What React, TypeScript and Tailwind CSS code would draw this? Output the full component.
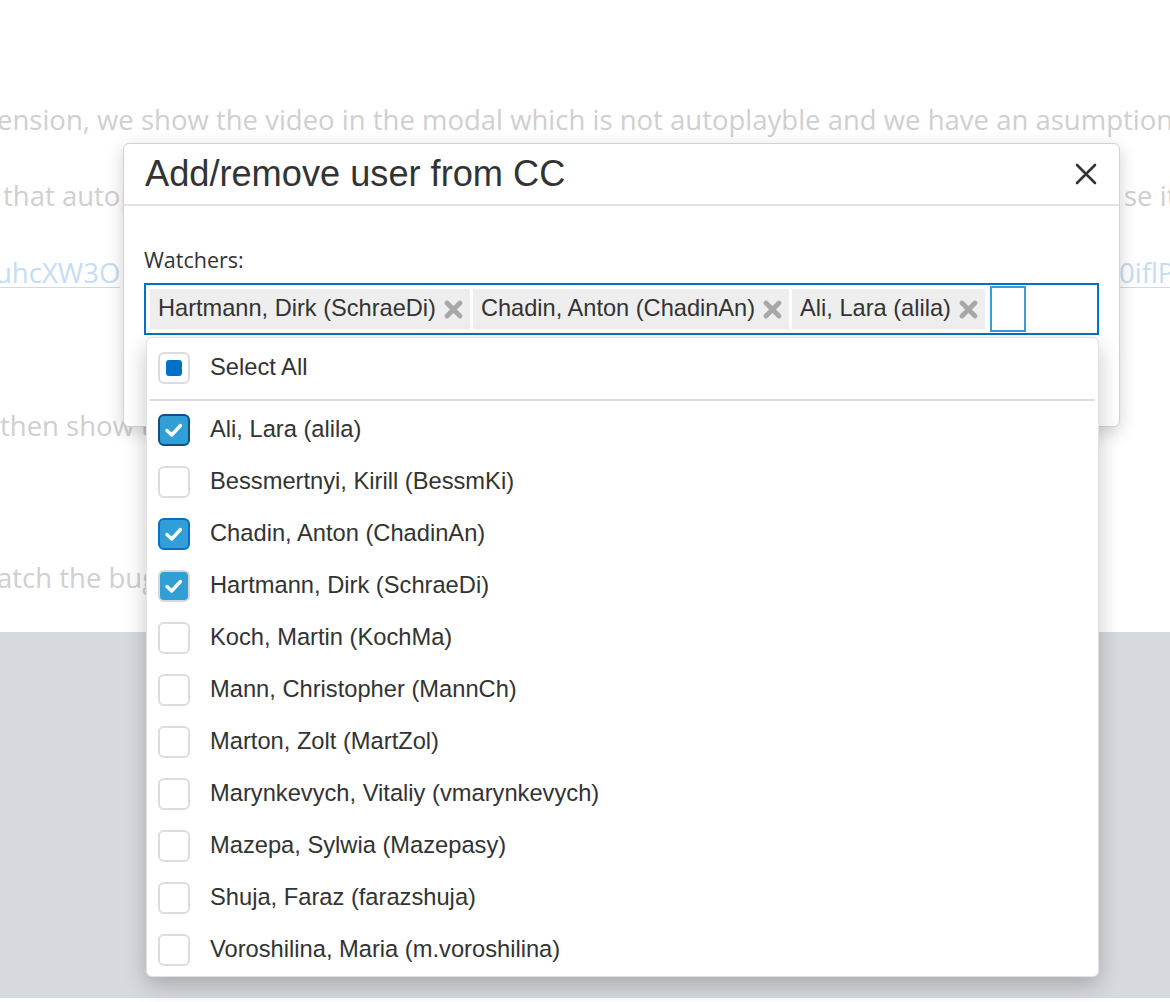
const USERS: { name: string; checked: boolean; ring: string }[] = [
  { name: 'Ali, Lara (alila)', checked: true, ring: 'border-[#0c4f8c]' },
  { name: 'Bessmertnyi, Kirill (BessmKi)', checked: false, ring: '' },
  { name: 'Chadin, Anton (ChadinAn)', checked: true, ring: 'border-[#0a6fc4]' },
  { name: 'Hartmann, Dirk (SchraeDi)', checked: true, ring: 'border-[#d9d9d9]' },
  { name: 'Koch, Martin (KochMa)', checked: false, ring: '' },
  { name: 'Mann, Christopher (MannCh)', checked: false, ring: '' },
  { name: 'Marton, Zolt (MartZol)', checked: false, ring: '' },
  { name: 'Marynkevych, Vitaliy (vmarynkevych)', checked: false, ring: '' },
  { name: 'Mazepa, Sylwia (Mazepasy)', checked: false, ring: '' },
  { name: 'Shuja, Faraz (farazshuja)', checked: false, ring: '' },
  { name: 'Voroshilina, Maria (m.voroshilina)', checked: false, ring: '' },
];

const CHIPS = ['Hartmann, Dirk (SchraeDi)', 'Chadin, Anton (ChadinAn)', 'Ali, Lara (alila)'];

function CheckBox({ checked, ring }: { checked: boolean; ring: string }) {
  if (!checked) {
    return <span className="h-[32px] w-[32px] shrink-0 rounded-[6px] border-2 border-[#dcdcdc] bg-white" />;
  }
  return (
    <span className={`grid h-[32px] w-[32px] shrink-0 place-items-center rounded-[6px] border-2 bg-[#2f9fd6] ${ring}`}>
      <svg width="24" height="24" viewBox="0 0 24 24" fill="none" stroke="white" strokeWidth="3.4" strokeLinecap="round" strokeLinejoin="round">
        <path d="M5 12.5 L9.7 17 L18.5 7.5" />
      </svg>
    </span>
  );
}

function ChipX() {
  return (
    <svg width="21" height="21" viewBox="0 0 21 21" fill="none" stroke="#a8a8a8" strokeWidth="4.8" strokeLinecap="round">
      <path d="M4 4 L17 17 M17 4 L4 17" />
    </svg>
  );
}

function Background() {
  return (
    <div className="h-[632px] overflow-hidden whitespace-nowrap pt-[82px] font-['Open_Sans',sans-serif] text-[27.5px] leading-[76.4px] text-[#cfcfcf]">
      <div className="-ml-[3px]">ension, we show the video in the modal which is not autoplayble and we have an asumption</div>
      <div className="flex">
        <span className="w-[1124px] shrink-0 pl-[3px]"> that autoplay in the modal is blocked by the browser policy, becau</span>
        <span>se it</span>
      </div>
      <div className="flex">
        <span className="w-[1124px] shrink-0 -ml-[5px] text-[#c6dcf2] underline decoration-1 underline-offset-4">uhcXW3O</span>
        <span className="text-[#c6dcf2] underline decoration-1 underline-offset-4">0iflP</span>
      </div>
      <div>&nbsp;</div>
      <div>then show the</div>
      <div>&nbsp;</div>
      <div className="-ml-[3px]">atch the bug</div>
    </div>
  );
}

export default function App() {
  return (
    <div className="relative h-[1002px] w-[1170px] overflow-hidden bg-white font-['Liberation_Sans',Arial,sans-serif]">
      <Background />
      <div className="h-[366px] bg-[#d6d9dd]" />

      <div className="absolute left-[123px] top-[143px] h-[284px] w-[997px] rounded-[6px] border border-[#d2d2d2] bg-white shadow-[0_5px_18px_rgba(0,0,0,0.18)]">
        <div className="flex h-[62px] items-center justify-between border-b-2 border-[#e3e3e3] pl-[21px] pr-[22px]">
          <h1 className="pt-[1px] text-[36.2px] leading-none text-[#333]">Add/remove user from CC</h1>
          <svg width="22" height="22" viewBox="0 0 22 22" fill="none" stroke="#333" strokeWidth="2.6" strokeLinecap="round">
            <path d="M2 2 L20 20 M20 2 L2 20" />
          </svg>
        </div>
        <div className="px-[20px] pt-[39px]">
          <div className="mb-[8px] font-['Open_Sans',sans-serif] text-[21.5px] leading-[30px] text-[#333]">Watchers:</div>
          <div className="relative">
            <div className="flex h-[52px] items-start gap-[3px] border-2 border-[#0070c9] px-[4px] py-[4px]">
              {CHIPS.map((c) => (
                <span key={c} className="flex h-[40px] items-center gap-[7px] bg-[#eeeeee] pl-[8px] pr-[6px] text-[23.6px] text-[#333]">
                  {c}
                  <ChipX />
                </span>
              ))}
              <span className="ml-[2px] h-[46px] w-[36px] self-center border-2 border-[#3d9bd8]" />
            </div>

            <div className="absolute left-[2px] top-[54px] w-[953px] rounded-[6px] border border-[#e2e2e2] bg-white pt-[4px] shadow-[0_8px_22px_rgba(0,0,0,0.22)]">
              <div className="flex h-[52px] items-center gap-[20px] pl-[11px] text-[23.7px] text-[#333]">
                <span className="grid h-[32px] w-[32px] shrink-0 place-items-center rounded-[6px] border-2 border-[#dcdcdc] bg-white">
                  <span className="h-[16px] w-[16px] rounded-[3px] bg-[#0070c9]" />
                </span>
                Select All
              </div>
              <div className="mx-[3px] mt-[5px] h-[2px] bg-[#dddddd]" />
              <div className="mt-[3px]">
                {USERS.map((u) => (
                  <div key={u.name} className="flex h-[52px] items-center gap-[20px] pl-[11px] text-[23.7px] text-[#333]">
                    <CheckBox checked={u.checked} ring={u.ring} />
                    {u.name}
                  </div>
                ))}
              </div>
            </div>
          </div>
        </div>
      </div>
    </div>
  );
}
